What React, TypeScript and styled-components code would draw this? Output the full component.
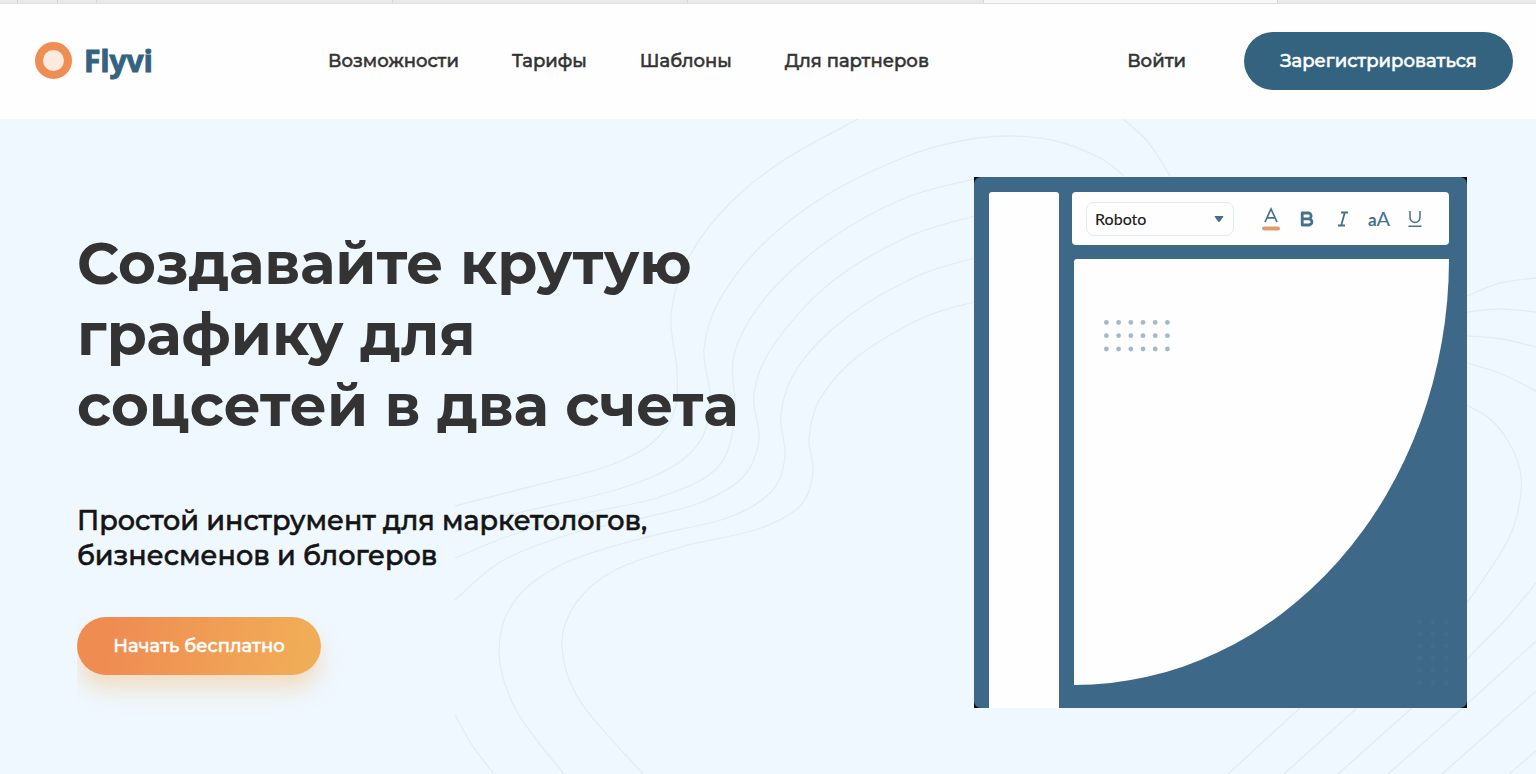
import React from "react";
import styled, { createGlobalStyle } from "styled-components";

const color = {
  ink: "#333333",
  blue: "#34637f",
  editor: "#3e6887",
  icon: "#44708c",
  sky: "#eff8ff",
  contour: "#e1edf3",
};

const GlobalStyle = createGlobalStyle`
  *, *::before, *::after { box-sizing: border-box; }
  body {
    margin: 0;
    background: ${color.sky};
    color: ${color.ink};
    font-family: Montserrat, Inter, "Noto Sans", sans-serif;
  }
  button, select { font: inherit; }
`;

/* Browser tab strip */

const TabStrip = styled.div`
  display: flex;
  height: 4px;
  background: #e9eaeb;
  border-bottom: 1px solid #dcdee0;
  overflow: hidden;
`;

const Tab = styled.div<{ $width?: number; $active?: boolean }>`
  flex: ${(p) => (p.$width ? `0 0 ${p.$width}px` : "1 0 0")};
  background: ${(p) => (p.$active ? "#f6f7f9" : "transparent")};
  border-right: 1px solid #d3d5d6;

  &:last-child {
    border-right: 0;
  }
`;

/* Header */

const Header = styled.header`
  display: flex;
  align-items: center;
  height: 115px;
  padding: 0 23px 2px 35px;
  background: #fefefe;
`;

const Logo = styled.a`
  display: flex;
  align-items: center;
  gap: 12px;
  flex: 0 0 293px;
  color: ${color.blue};
  font: 700 30px/40px "Noto Sans", sans-serif;
  -webkit-text-stroke: 1px;
  text-decoration: none;
`;

const Nav = styled.nav`
  display: flex;
  gap: 53px;
`;

const NavLink = styled.a`
  color: ${color.ink};
  font-size: 18px;
  font-weight: 500;
  line-height: 24px;
  -webkit-text-stroke: 0.5px;
  text-decoration: none;
  white-space: nowrap;
`;

const Account = styled.div`
  display: flex;
  align-items: center;
  gap: 58px;
  margin-left: auto;
`;

const PillButton = styled.button<{ $accent?: boolean }>`
  height: 58px;
  min-width: ${(p) => (p.$accent ? 244 : 269)}px;
  padding: 0 32px;
  border: 0;
  border-radius: 29px;
  color: #fff;
  font-size: 18px;
  font-weight: 500;
  line-height: 24px;
  -webkit-text-stroke: 0.5px;
  white-space: nowrap;
  cursor: pointer;
  background: ${(p) =>
    p.$accent ? "linear-gradient(100deg, #ef8c52 15%, #f1ac57 90%)" : color.blue};
  box-shadow: ${(p) => (p.$accent ? "0 14px 22px rgba(243, 176, 90, 0.36)" : "none")};
`;

/* Hero */

const Hero = styled.main`
  position: relative;
  display: flex;
  justify-content: space-between;
  gap: 32px;
  min-height: calc(100vh - 119px);
  padding: 58px 69px 66px 77px;
  background: ${color.sky};
  overflow: hidden;
`;

const Contours = styled.svg`
  position: absolute;
  top: 0;
  right: 0;
  fill: none;
  stroke: ${color.contour};
  stroke-width: 1.3;
`;

const Copy = styled.div`
  position: relative;
  padding-top: 51px;
`;

const Title = styled.h1`
  margin: 0;
  font-size: 58px;
  font-weight: 700;
  line-height: 71px;
  white-space: nowrap;
`;

const Lead = styled.p`
  margin: 62px 0 0;
  color: #141414;
  font-size: 27px;
  font-weight: 500;
  line-height: 35px;
  -webkit-text-stroke: 0.6px;
`;

const Action = styled.div`
  display: flex;
  width: fit-content;
  margin-top: 44px;
  clip-path: inset(0 -50px -50px 0);
`;

/* Editor preview */

const Frame = styled.section`
  position: relative;
  flex: 0 0 493px;
  height: 531px;
  background: #05070a;
`;

const Editor = styled.div`
  display: grid;
  grid-template-columns: 70px minmax(0, 1fr);
  column-gap: 13px;
  height: 100%;
  padding: 15px 18px 0 15px;
  border-radius: 7px;
  background: ${color.editor};
`;

const Sidebar = styled.div`
  background: #fefefe;
  border-radius: 3px 3px 0 0;
`;

const Workspace = styled.div`
  display: flex;
  flex-direction: column;
  gap: 14px;
`;

const Toolbar = styled.div`
  display: flex;
  align-items: center;
  height: 53px;
  padding: 0 14px;
  border-radius: 4px;
  background: #fefefe;
`;

const FontPicker = styled.label`
  display: flex;
  align-items: center;
  width: 148px;
  height: 34px;
  margin-right: 19px;
  padding-right: 9px;
  border: 1px solid #e1eaee;
  border-radius: 8px;
`;

const FontSelect = styled.select`
  flex: 1;
  min-width: 0;
  height: 30px;
  padding: 0 8px;
  border: 0;
  outline: 0;
  appearance: none;
  background: transparent;
  color: #222;
  font: 500 16px/22px Lato, sans-serif;
`;

const Tool = styled.button`
  display: flex;
  align-items: center;
  justify-content: center;
  flex: 0 0 36px;
  height: 32px;
  padding: 0;
  border: 0;
  background: none;
  color: ${color.icon};
  cursor: pointer;
`;

const ToolIcon = styled.svg`
  fill: none;
  stroke: currentColor;
  stroke-width: 2;
`;

const CaseSample = styled.span`
  font: 400 20px/24px Lato, sans-serif;
  small { font-size: 17px; font-weight: 700; }
`;

const Canvas = styled.div`
  height: 426px;
  margin-left: 2px;
  padding: 61px 0 0 30px;
  border-radius: 3px 0 100% 0;
  background: #fefefe;
`;

const CornerDots = styled.svg`
  position: absolute;
  right: 16px;
  bottom: 21px;
`;

type Point = [number, number];

/* Catmull-Rom spline through the points, written as cubic Béziers */
function smooth(points: Point[]): string {
  let d = `M${points[0].join(" ")}`;
  for (let i = 0; i < points.length - 1; i++) {
    const a = points[i - 1] ?? points[i];
    const b = points[i];
    const c = points[i + 1];
    const e = points[i + 2] ?? c;
    d += `C${b[0] + (c[0] - a[0]) / 6} ${b[1] + (c[1] - a[1]) / 6} ${c[0] - (e[0] - b[0]) / 6} ${c[1] - (e[1] - b[1]) / 6} ${c[0]} ${c[1]}`;
  }
  return d;
}

const contourLines: Point[][] = [
  [[858, 119], [784, 160], [729, 204], [689, 257], [671, 314], [677, 370], [674, 412], [652, 443], [608, 466], [533, 486], [455, 506]],
  [[1124, 176], [1100, 158], [1056, 141], [1010, 136], [960, 141], [905, 157], [825, 196], [760, 247], [718, 303], [704, 350], [710, 397], [702, 438], [672, 467], [612, 491], [509, 515], [455, 532]],
  [[974, 179], [905, 198], [829, 240], [766, 297], [734, 355], [735, 418], [717, 468], [660, 497], [578, 515], [509, 536], [455, 558]],
  [[974, 216], [905, 238], [829, 284], [773, 346], [754, 394], [759, 440], [743, 477], [702, 502], [647, 517], [571, 534], [502, 561], [455, 600]],
  [[974, 258], [915, 277], [846, 318], [798, 367], [781, 413], [785, 457], [771, 492], [727, 518], [647, 537], [565, 563], [516, 599], [499, 650], [516, 710], [564, 774]],
  [[974, 302], [920, 319], [857, 357], [820, 399], [809, 438], [813, 472], [800, 506], [758, 529], [681, 547], [615, 570], [576, 603], [562, 645], [580, 701], [643, 774]],
  [[455, 715], [472, 745], [494, 774]],
  [[1123, 119], [1148, 142], [1172, 179]],
  [[1467, 296], [1500, 283], [1536, 278]],
  [[1467, 312], [1500, 309], [1536, 312]],
  [[1467, 336], [1502, 339], [1536, 347]],
  [[1467, 363], [1502, 374], [1536, 391]],
  [[1467, 405], [1490, 419], [1508, 441], [1520, 470], [1520, 500], [1507, 542], [1467, 603]],
  [[1536, 583], [1506, 619], [1467, 659]],
  [[1536, 641], [1467, 704], [1388, 774]],
  [[1536, 691], [1442, 774]],
  [[1536, 751], [1509, 774]],
  [[1300, 708], [1228, 774]],
  [[1357, 708], [1284, 774]],
  [[1412, 708], [1338, 774]],
];

function DotGrid({ cols, rows, dx, dy, r, fill }: { cols: number; rows: number; dx: number; dy: number; r: number; fill: string }) {
  const dots = [];
  for (let y = 0; y < rows; y++)
    for (let x = 0; x < cols; x++) dots.push(<circle key={`${x}-${y}`} cx={r + x * dx} cy={r + y * dy} r={r} fill={fill} />);
  return <>{dots}</>;
}

export default function App() {
  return (
    <>
      <GlobalStyle />
      <TabStrip aria-hidden="true">
        <Tab $width={18} />
        <Tab $width={40} />
        <Tab $width={39} />
        <Tab $width={296} />
        <Tab $width={295} />
        <Tab $width={296} />
        <Tab $width={294} $active />
        <Tab />
      </TabStrip>

      <Header>
        <Logo href="#">
          <svg width="37" height="37" viewBox="0 0 37 37" aria-hidden="true">
            <circle cx="18.5" cy="18.5" r="14.5" fill="#fdeadf" stroke="#ef8e53" strokeWidth="8" />
          </svg>
          Flyvi
        </Logo>
        <Nav>
          <NavLink href="#features">Возможности</NavLink>
          <NavLink href="#pricing">Тарифы</NavLink>
          <NavLink href="#templates">Шаблоны</NavLink>
          <NavLink href="#partners">Для партнеров</NavLink>
        </Nav>
        <Account>
          <NavLink href="#login">Войти</NavLink>
          <PillButton type="button">Зарегистрироваться</PillButton>
        </Account>
      </Header>

      <Hero>
        <Contours width="1082" height="655" viewBox="454 119 1082 655" aria-hidden="true">
          {contourLines.map((line, i) => (
            <path key={i} d={smooth(line)} />
          ))}
        </Contours>

        <Copy>
          <Title>
            Создавайте крутую
            <br />
            графику для
            <br />
            соцсетей в два счета
          </Title>
          <Lead>
            Простой инструмент для маркетологов,
            <br />
            бизнесменов и блогеров
          </Lead>
          <Action>
            <PillButton type="button" $accent>
              Начать бесплатно
            </PillButton>
          </Action>
        </Copy>

        <Frame>
          <Editor>
            <Sidebar />
            <Workspace>
              <Toolbar>
                <FontPicker>
                  <FontSelect aria-label="Шрифт" defaultValue="Roboto">
                    <option>Roboto</option>
                  </FontSelect>
                  <svg width="10" height="6" viewBox="0 0 10 6" aria-hidden="true">
                    <path d="M1 0.5h8L5.6 5.2a.8.8 0 0 1-1.2 0z" fill={color.icon} stroke={color.icon} strokeLinejoin="round" />
                  </svg>
                </FontPicker>
                <Tool type="button" aria-label="Цвет текста">
                  <ToolIcon width="18" height="24" viewBox="0 0 18 24">
                    <path d="M3 15 9 2l6 13M5 10.8h8" strokeWidth="1.7" />
                    <path d="M2 21.500h14" stroke="#df9c67" strokeWidth="4" strokeLinecap="round" />
                  </ToolIcon>
                </Tool>
                <Tool type="button" aria-label="Полужирный">
                  <ToolIcon width="14" height="16" viewBox="0 0 14 16">
                    <path d="M2.2 2h6a2.9 2.9 0 0 1 0 5.8H2.2zM2.2 7.800h6.600a3.100 3.100 0 0 1 0 6.200H2.200z" strokeWidth="2.8" strokeLinejoin="round" />
                  </ToolIcon>
                </Tool>
                <Tool type="button" aria-label="Курсив">
                  <ToolIcon width="12" height="16" viewBox="0 0 12 16">
                    <path d="M4 1.5h7M1 14.5h7M7.8 1.5l-3.6 13" strokeWidth="1.8" />
                  </ToolIcon>
                </Tool>
                <Tool type="button" aria-label="Размер текста">
                  <CaseSample>
                    <small>a</small>A
                  </CaseSample>
                </Tool>
                <Tool type="button" aria-label="Подчеркнутый">
                  <ToolIcon width="14" height="16" viewBox="0 0 14 16">
                    <path d="M2 0v6.5a5 5 0 0 0 10 0V0M0.5 15.2h13" strokeWidth="1.5" />
                  </ToolIcon>
                </Tool>
              </Toolbar>
              <Canvas>
                <svg width="68" height="34" viewBox="0 0 68 34" aria-hidden="true">
                  <DotGrid cols={6} rows={3} dx={12.2} dy={13.3} r={2.4} fill="#a3b9c7" />
                </svg>
              </Canvas>
            </Workspace>
          </Editor>
          <CornerDots width="34" height="68" viewBox="0 0 34 68" aria-hidden="true">
            <DotGrid cols={3} rows={6} dx={13.3} dy={12.2} r={2.6} fill="#3f6d8d" />
          </CornerDots>
        </Frame>
      </Hero>
    </>
  );
}
